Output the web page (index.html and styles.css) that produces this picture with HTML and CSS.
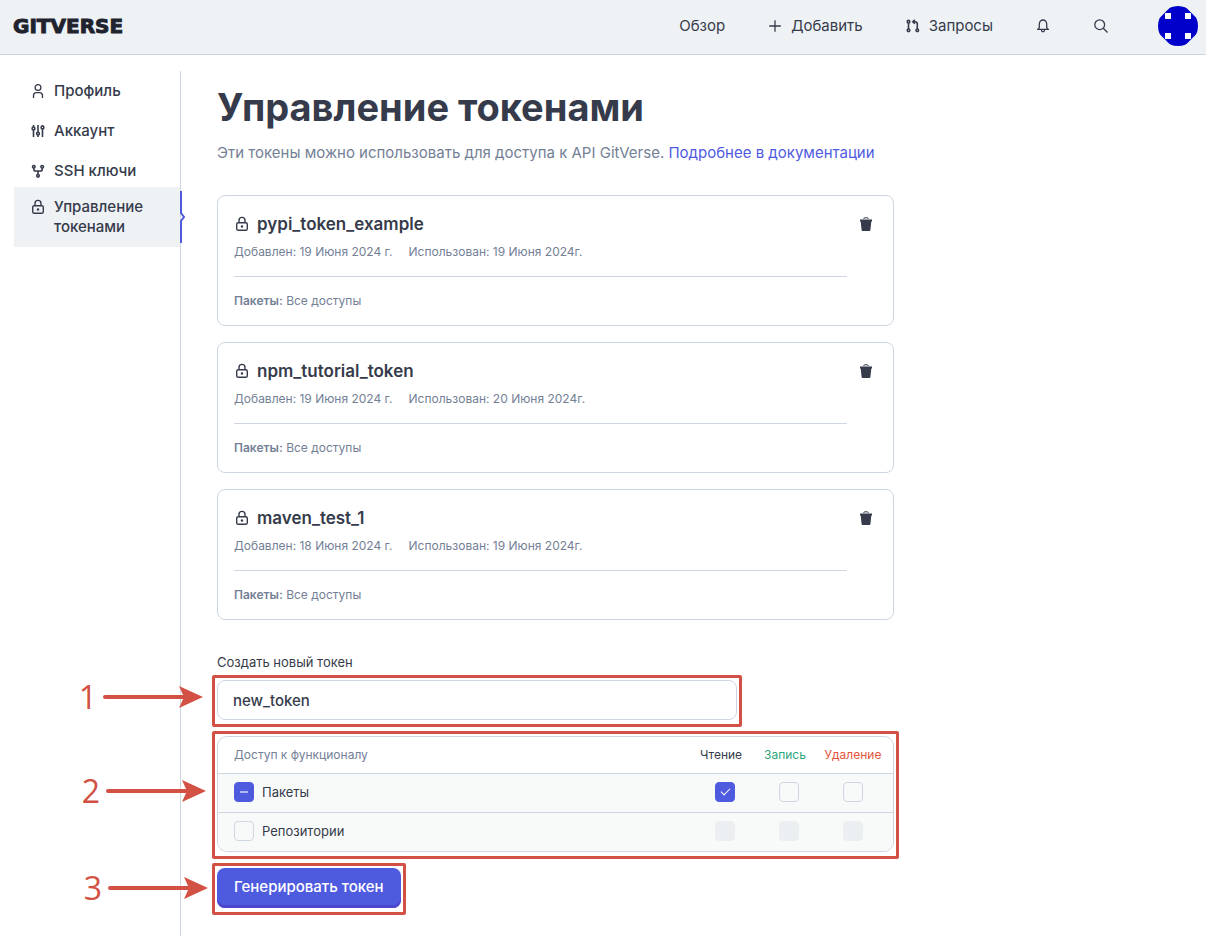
FILE: index.html
```html
<!DOCTYPE html>
<html lang="ru">
<head>
<meta charset="utf-8">
<meta name="viewport" content="width=device-width, initial-scale=1">
<title>Управление токенами</title>
<link rel="stylesheet" href="styles.css">
</head>
<body>
<svg class="sprite" aria-hidden="true">
  <symbol id="lock" viewBox="0 0 16 16"><rect x="2.7" y="6.7" width="10.6" height="7.6" rx="1.6" fill="none" stroke="currentColor" stroke-width="1.4"/><path d="M5 6.5V4.400a3 3 0 0 1 6 0v2.100" fill="none" stroke="currentColor" stroke-width="1.4"/><circle cx="8" cy="10.5" r="1.200" fill="currentColor"/></symbol>
  <symbol id="trash" viewBox="0 0 16 16"><path d="M2 3.500h12v2h-.7L12.400 14q-.1.900-1 .900H4.600q-.9 0-1-.9L2.700 5.500H2z" fill="currentColor"/><path d="M5.600 3q.2-1.200 1.200-1.200h2.400q1 0 1.200 1.200" fill="none" stroke="currentColor" stroke-width="1"/></symbol>
</svg>

<header class="header">
  <a class="logo" href="#">GITVERSE</a>
  <nav class="topnav">
    <a class="toplink" href="#">Обзор</a>
    <a class="toplink" href="#"><svg class="icon" viewBox="0 0 16 16"><path d="M8 2.200v11.600M2.200 8h11.600"/></svg>Добавить</a>
    <a class="toplink" href="#"><svg class="icon bold" viewBox="0 0 16 16"><circle cx="3.500" cy="3.700" r="1.300"/><circle cx="3.500" cy="12.300" r="1.300"/><circle cx="12.300" cy="12.300" r="1.300"/><path d="M3.500 5v6M12.300 11V6q0-2.300-2.300-2.300H8M9.800 1.700l-2 2 2 2"/></svg>Запросы</a>
    <button class="icon-button" aria-label="Уведомления"><svg class="icon" viewBox="0 0 16 16"><path d="M2 11.400h12M3.400 11.200l.9-1.900V6.200C4.300 3.700 5.900 2 8 2s3.700 1.700 3.700 4.200v3.100l.9 1.900M6.300 11.800q.2 2 1.700 2t1.700-2"/></svg></button>
    <button class="icon-button" aria-label="Поиск"><svg class="icon" viewBox="0 0 16 16"><circle cx="6.700" cy="6.700" r="4.900"/><path d="M10.300 10.300l4.200 4.200"/></svg></button>
    <a class="avatar" href="#" aria-label="Мой профиль"><svg viewBox="0 0 40 40"><path d="M13.500 0h13L40 13.500v13L26.500 40h-13L0 26.500v-13z" fill="#0000ca"/><path d="M7 7h6v6H7zM27 7h6v6h-6zM7 27h6v6H7zM27 27h6v6h-6z" fill="#fff"/></svg></a>
  </nav>
</header>

<div class="layout">
  <aside class="sidebar">
    <nav class="menu">
      <a class="menu-item" href="#"><svg class="icon" viewBox="0 0 16 16"><circle cx="8" cy="4.500" r="2.900"/><path d="M3.500 15v-2.300q0-3 3-3h3q3 0 3 3V15"/></svg>Профиль</a>
      <a class="menu-item" href="#"><svg class="icon bold" viewBox="0 0 16 16"><path d="M3.500 2v1.800M3.500 7v7M8 2v7M8 12.200V14M12.500 2v.8M12.500 6v8"/><circle cx="3.500" cy="5.400" r="1.400"/><circle cx="8" cy="10.600" r="1.400"/><circle cx="12.500" cy="4.400" r="1.400"/></svg>Аккаунт</a>
      <a class="menu-item" href="#"><svg class="icon bold" viewBox="0 0 16 16"><circle cx="3.800" cy="3.800" r="1.300"/><circle cx="12.200" cy="3.800" r="1.300"/><circle cx="8" cy="12.800" r="1.300"/><path d="M3.800 5.200v1q0 1.800 1.800 1.800h4.800q1.800 0 1.800-1.800v-1M8 8v3.400"/></svg>SSH ключи</a>
      <a class="menu-item active" href="#" aria-current="page"><svg class="icon"><use href="#lock"/></svg>Управление токенами<svg class="marker" viewBox="0 0 8 52"><path d="M1 0v22l3 4-3 4v22"/></svg></a>
    </nav>
  </aside>

  <main class="content">
    <h1 class="title">Управление токенами</h1>
    <p class="intro">Эти токены можно использовать для доступа к API GitVerse. <a href="#">Подробнее в документации</a></p>

    <section class="tokens">
      <article class="card">
        <div class="card-body">
          <h2 class="card-title"><svg class="icon"><use href="#lock"/></svg>pypi_token_example</h2>
          <p class="meta"><span>Добавлен: 19 Июня 2024 г.</span><span>Использован: 19 Июня 2024г.</span></p>
          <p class="scope"><b>Пакеты:</b> Все доступы</p>
        </div>
        <button class="icon-button" aria-label="Удалить токен"><svg class="icon"><use href="#trash"/></svg></button>
      </article>
      <article class="card">
        <div class="card-body">
          <h2 class="card-title"><svg class="icon"><use href="#lock"/></svg>npm_tutorial_token</h2>
          <p class="meta"><span>Добавлен: 19 Июня 2024 г.</span><span>Использован: 20 Июня 2024г.</span></p>
          <p class="scope"><b>Пакеты:</b> Все доступы</p>
        </div>
        <button class="icon-button" aria-label="Удалить токен"><svg class="icon"><use href="#trash"/></svg></button>
      </article>
      <article class="card">
        <div class="card-body">
          <h2 class="card-title"><svg class="icon"><use href="#lock"/></svg>maven_test_1</h2>
          <p class="meta"><span>Добавлен: 18 Июня 2024 г.</span><span>Использован: 19 Июня 2024г.</span></p>
          <p class="scope"><b>Пакеты:</b> Все доступы</p>
        </div>
        <button class="icon-button" aria-label="Удалить токен"><svg class="icon"><use href="#trash"/></svg></button>
      </article>
    </section>

    <form class="form">
      <label class="label" for="token-name">Создать новый токен</label>
      <div class="step step-name">
        <input class="input" id="token-name" type="text" value="new_token">
        <div class="callout"><span>1</span><svg viewBox="0 0 100 24"><path class="shaft" d="M2 12h78"/><path class="head" d="M76 1l24 11-24 11 5-11z"/></svg></div>
      </div>
      <div class="step step-access">
        <div class="access">
          <table>
            <thead>
              <tr><th class="name" scope="col">Доступ к функционалу</th><th class="read" scope="col">Чтение</th><th class="write" scope="col">Запись</th><th class="delete" scope="col">Удаление</th></tr>
            </thead>
            <tbody>
              <tr>
                <td><label class="check"><input class="box partial" type="checkbox" checked>Пакеты</label></td>
                <td><input class="box" type="checkbox" checked aria-label="Пакеты: чтение"></td>
                <td><input class="box" type="checkbox" aria-label="Пакеты: запись"></td>
                <td><input class="box" type="checkbox" aria-label="Пакеты: удаление"></td>
              </tr>
              <tr>
                <td><label class="check"><input class="box" type="checkbox">Репозитории</label></td>
                <td><input class="box" type="checkbox" disabled aria-label="Репозитории: чтение"></td>
                <td><input class="box" type="checkbox" disabled aria-label="Репозитории: запись"></td>
                <td><input class="box" type="checkbox" disabled aria-label="Репозитории: удаление"></td>
              </tr>
            </tbody>
          </table>
        </div>
        <div class="callout"><span>2</span><svg viewBox="0 0 100 24"><path class="shaft" d="M2 12h78"/><path class="head" d="M76 1l24 11-24 11 5-11z"/></svg></div>
      </div>
      <div class="step step-submit">
        <button class="submit" type="button">Генерировать токен</button>
        <div class="callout"><span>3</span><svg viewBox="0 0 100 24"><path class="shaft" d="M2 12h78"/><path class="head" d="M76 1l24 11-24 11 5-11z"/></svg></div>
      </div>
    </form>
  </main>
</div>
</body>
</html>
```

FILE: styles.css
```css
:root {
  --ink: #363b4b;
  --muted: #738096;
  --line: #ced7e1;
  --panel: #eef2f5;
  --accent: #4f5bdf;
  --mark: #d25144;
}

* { box-sizing: border-box; }

body {
  margin: 0;
  min-height: 100vh;
  display: flex;
  flex-direction: column;
  background: #fff;
  color: var(--ink);
  font: 15px/20px Inter, "Liberation Sans", sans-serif;
}

h1, h2, p { margin: 0; }
a { color: inherit; text-decoration: none; }
button, input { font: inherit; color: inherit; }

.sprite { position: absolute; width: 0; height: 0; }

.icon {
  width: 16px;
  height: 16px;
  flex: none;
  fill: none;
  stroke: currentColor;
  stroke-width: 1.3;
}
.icon.bold { stroke-width: 1.6; }
.icon use { stroke: none; }

.icon-button {
  display: flex;
  padding: 0;
  border: 0;
  background: none;
}

.header {
  display: flex;
  align-items: center;
  justify-content: space-between;
  padding: 6px 8px 8px 13px;
  background: var(--panel);
  border-bottom: 1px solid var(--line);
}

.logo {
  color: #1f232e;
  font: bold 20px/20px "DejaVu Sans", sans-serif;
  -webkit-text-stroke: 1px #1f232e;
}

.topnav { display: flex; align-items: center; gap: 42px; }
.toplink { display: flex; align-items: center; gap: 8px; }

.avatar {
  width: 40px;
  height: 40px;
  margin-left: 7px;
  border-radius: 50%;
  overflow: hidden;
}
.avatar svg { display: block; }

.layout { flex: 1; display: flex; }

.sidebar {
  width: 181px;
  flex: none;
  margin-top: 16px;
  padding-left: 14px;
  border-right: 1px solid var(--line);
}

.menu { display: flex; flex-direction: column; }

.menu-item {
  position: relative;
  display: flex;
  gap: 8px;
  padding: 10px 16px;
  font-weight: 500;
}
.menu-item .icon { margin-top: 2px; }
.menu-item.active { margin-top: -4px; background: var(--panel); }

.marker {
  position: absolute;
  top: 4px;
  right: -8px;
  width: 8px;
  height: 52px;
  fill: none;
  stroke: var(--accent);
  stroke-width: 2;
}

.content {
  flex: 1;
  max-width: 749px;
  padding: 28px 36px 20px;
}

.title { font-size: 38px; line-height: 48px; font-weight: 700; }
.intro { margin-top: 12px; color: var(--muted); }
.intro a { color: var(--accent); }

.tokens {
  display: flex;
  flex-direction: column;
  gap: 16px;
  margin-top: 32px;
}

.card {
  display: flex;
  align-items: flex-start;
  gap: 11px;
  padding: 16px 19px 16px 16px;
  border: 1px solid var(--line);
  border-radius: 8px;
}
.card > .icon-button { margin-top: 4px; }
.card-body { flex: 1; }

.card-title {
  display: flex;
  align-items: center;
  gap: 7px;
  font-size: 17px;
  line-height: 24px;
  font-weight: 600;
}

.meta, .scope {
  color: var(--muted);
  font-size: 12px;
  line-height: 16px;
}
.meta {
  display: flex;
  gap: 16px;
  padding: 8px 0 16px;
  border-bottom: 1px solid var(--line);
}
.scope { padding-top: 16px; }
.scope b { font-weight: 600; }

.form { margin-top: 32px; }

.label {
  display: block;
  margin-bottom: 8px;
  font-size: 13px;
}

.step { position: relative; margin-bottom: 16px; }
.step-name { max-width: 520px; }
.step-submit { width: max-content; }

.step::after {
  content: "";
  position: absolute;
  inset: -5px -5px -7px;
  border: 3px solid var(--mark);
  border-radius: 2px;
  pointer-events: none;
}

.callout {
  position: absolute;
  bottom: 7px;
  right: 100%;
  display: flex;
  align-items: center;
  gap: 6px;
  margin-right: 14px;
  color: var(--mark);
  font: 32px/32px "Open Sans", sans-serif;
}
.step-access .callout { bottom: 45px; margin-right: 11px; }
.step-submit .callout { bottom: 4px; margin-right: 9px; }
.callout svg { width: 100px; height: 24px; }
.shaft { stroke: var(--mark); stroke-width: 4; stroke-linecap: round; }
.head { fill: var(--mark); }

.input {
  display: block;
  width: 100%;
  height: 40px;
  padding: 0 15px;
  border: 1px solid var(--line);
  border-radius: 8px;
  background: #fff;
  font-weight: 500;
}

.access {
  border: 1px solid var(--line);
  border-radius: 10px;
  overflow: hidden;
}
.access table {
  width: 100%;
  border-collapse: collapse;
  table-layout: fixed;
  font-size: 13px;
}
.access th {
  height: 36px;
  padding: 0;
  font-size: 12px;
  font-weight: 400;
  white-space: nowrap;
}
.access th:not(.name) { width: 64px; }
.access th.name { padding-left: 16px; color: var(--muted); text-align: left; }
.access th.read { padding-right: 8px; }
.access th.write { padding-right: 8px; color: #2ea67d; }
.access th.delete { color: #e5533b; }
.access td {
  height: 39px;
  padding: 0 0 2px;
  border-top: 1px solid var(--line);
  background: #f8fafa;
  text-align: center;
}
.access td:first-child { padding-left: 16px; }
.access tr > :last-child { width: 72px; padding-right: 8px; }

.check { display: flex; align-items: center; gap: 8px; }

.box {
  appearance: none;
  display: inline-grid;
  place-items: center;
  width: 20px;
  height: 20px;
  margin: 0;
  border: 1px solid var(--line);
  border-radius: 4px;
  vertical-align: middle;
}
.box:checked { border-color: var(--accent); background: var(--accent); }
.box:checked::after {
  content: "";
  width: 8px;
  height: 4px;
  margin-bottom: 3px;
  border: solid #fff;
  border-width: 0 0 1px 1px;
  transform: rotate(-45deg);
}
.box.partial::after {
  height: 2px;
  margin: 0;
  border: 0;
  background: #b0b5f1;
  transform: none;
}
.box:disabled { border-color: #eceff2; background: #eceff2; }

.submit {
  display: block;
  height: 40px;
  padding: 0 17px 2px;
  border: 0;
  border-radius: 8px;
  background: var(--accent);
  box-shadow: inset 0 -3px #4d44cf;
  color: #fff;
  font-weight: 500;
}
```
